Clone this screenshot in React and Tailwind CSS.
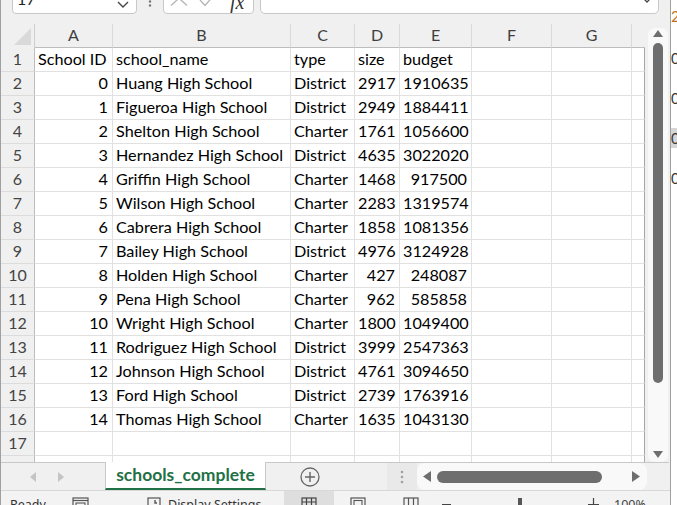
import React from 'react';

const data = [
  [0, 'Huang High School', 'District', 2917, 1910635],
  [1, 'Figueroa High School', 'District', 2949, 1884411],
  [2, 'Shelton High School', 'Charter', 1761, 1056600],
  [3, 'Hernandez High School', 'District', 4635, 3022020],
  [4, 'Griffin High School', 'Charter', 1468, 917500],
  [5, 'Wilson High School', 'Charter', 2283, 1319574],
  [6, 'Cabrera High School', 'Charter', 1858, 1081356],
  [7, 'Bailey High School', 'District', 4976, 3124928],
  [8, 'Holden High School', 'Charter', 427, 248087],
  [9, 'Pena High School', 'Charter', 962, 585858],
  [10, 'Wright High School', 'Charter', 1800, 1049400],
  [11, 'Rodriguez High School', 'District', 3999, 2547363],
  [12, 'Johnson High School', 'District', 4761, 3094650],
  [13, 'Ford High School', 'District', 2739, 1763916],
  [14, 'Thomas High School', 'Charter', 1635, 1043130],
];

const letters = ['A', 'B', 'C', 'D', 'E', 'F', 'G'];

function RowHeader({ n }) {
  return (
    <div className="h-[24px] bg-[#f0f0f0] border-r border-b border-r-[#bdbdbd] border-b-[#dcdcdc] text-center text-[16px] leading-[21px] text-[#444]">
      {n}
    </div>
  );
}

function Cell({ children, right, last }) {
  return (
    <div
      className={
        'h-[24px] border-b border-r border-b-[#e1e1e1] whitespace-nowrap text-[16.2px] leading-[21px] text-black pl-[3px] pr-[4px] ' +
        (right ? 'text-right ' : 'text-left ') +
        (last ? 'border-r-[#a8a8a8]' : 'border-r-[#e1e1e1]')
      }
    >
      {children}
    </div>
  );
}

function Row({ n, cells }) {
  const c = cells || ['', '', '', '', ''];
  const rights = [true, false, false, true, true];
  return (
    <>
      <RowHeader n={n} />
      {c.map((v, i) => (
        <Cell key={i} right={rights[i] && !(n === 1)}>
          {v}
        </Cell>
      ))}
      <Cell />
      <Cell />
      <Cell last />
    </>
  );
}

export default function App() {
  return (
    <div className="w-[677px] h-[505px] flex overflow-hidden bg-white font-[Lato,sans-serif]">
      {/* main window */}
      <div className="w-[671px] h-[505px] flex flex-col border-l border-r border-[#a0a0a0] bg-[#f0f0f0] overflow-hidden">
        {/* formula bar */}
        <div className="h-[24px] flex items-start shrink-0 overflow-hidden">
          <div className="ml-[11px] mt-[-16px] w-[125px] h-[30px] bg-white border border-[#c8c8c8] rounded-[4px] flex items-start justify-between pl-[4px] pt-[3px] pr-[7px] overflow-hidden">
            <span className="text-[16px] leading-[21px] text-[#222]">17</span>
            <svg width="12" height="22" viewBox="0 0 12 22" className="mt-[3px]">
              <path d="M1 11 L6 16 L11 11" fill="none" stroke="#444" strokeWidth="1.4" />
            </svg>
          </div>
          <svg width="26" height="24" viewBox="0 0 26 24" className="shrink-0">
            <circle cx="13" cy="1.5" r="1.2" fill="#777" />
            <circle cx="13" cy="5.5" r="1.2" fill="#777" />
          </svg>
          <div className="mt-[-16px] w-[91px] h-[30px] bg-white border border-[#c8c8c8] rounded-[4px] overflow-hidden shrink-0 flex items-start">
            <svg width="60" height="30" viewBox="0 0 60 30" className="shrink-0">
              <path d="M7 6 L23 20.5 M23 6 L7 20.5" fill="none" stroke="#b4b4b4" strokeWidth="1.3" />
              <path d="M36 15 L41 20.5 L51 9" fill="none" stroke="#b4b4b4" strokeWidth="1.3" />
            </svg>
            <div className="mt-[8px] ml-[6px] h-[24px] overflow-hidden">
              <span className="block italic text-[20px] leading-[18px] text-[#333] font-['Liberation_Serif',serif]">fx</span>
            </div>
          </div>
          <div className="ml-[6px] mt-[-16px] w-[399px] h-[30px] bg-white border border-[#c8c8c8] rounded-[5px] flex justify-end pr-[7px] shrink-0 overflow-hidden">
            <svg width="8" height="20" viewBox="0 0 8 20" className="mt-[12px]">
              <path d="M1 2 L4 5 L7 2" fill="none" stroke="#444" strokeWidth="1.3" />
            </svg>
          </div>
        </div>

        {/* grid area */}
        <div className="h-[438px] flex shrink-0 overflow-hidden">
          <div className="w-[644px] grid grid-cols-[34px_78px_178px_64px_45px_72px_80px_80px_13px] auto-rows-[24px] bg-white content-start">
            {/* header row */}
            <div className="h-[24px] bg-[#f0f0f0] border-r border-[#cfcfcf] flex items-end justify-end pr-[2px] pb-[3px]">
              <svg width="18" height="17" viewBox="0 0 18 17">
                <path d="M17 0 L17 17 L0 17 Z" fill="#d9d9d9" />
              </svg>
            </div>
            {letters.map((l) => (
              <div
                key={l}
                className="h-[24px] bg-[#f0f0f0] border-r border-b border-r-[#d9d9d9] border-b-[#bdbdbd] text-center text-[16px] leading-[21px] text-[#404040]"
              >
                {l}
              </div>
            ))}
            <div className="h-[24px] bg-[#f0f0f0] border-b border-b-[#bdbdbd]" />
            <Row n={1} cells={['School ID', 'school_name', 'type', 'size', 'budget']} />
            {data.map((d, i) => (
              <Row key={i} n={i + 2} cells={d} />
            ))}
            <Row n={17} />
            <Row n={18} />
          </div>
          {/* vertical scrollbar */}
          <div className="w-[25px] bg-[#f0f0f0] pl-[3px] pt-[4px]">
            <div className="w-[20px] h-[434px] bg-[#f9f9f9] rounded-[7px] flex flex-col items-center">
              <svg width="10" height="8" viewBox="0 0 10 8" className="mt-[2px]">
                <path d="M5 0 L10 7 L0 7 Z" fill="#6e6e6e" />
              </svg>
              <div className="mt-[5px] w-[10px] h-[340px] rounded-full bg-[#6e6e6e]" />
              <div className="flex-1" />
              <svg width="10" height="8" viewBox="0 0 10 8" className="mb-[3px]">
                <path d="M0 0 L10 0 L5 7 Z" fill="#6e6e6e" />
              </svg>
            </div>
          </div>
        </div>

        {/* sheet tab bar */}
        <div className="h-[28px] flex shrink-0">
          <div className="w-[104px] border-t border-[#c8c8c8] flex items-center">
            <svg width="8" height="12" viewBox="0 0 8 12" className="ml-[28px]">
              <path d="M7 1 L1 6 L7 11 Z" fill="#c4c4c4" />
            </svg>
            <svg width="8" height="12" viewBox="0 0 8 12" className="ml-[20px]">
              <path d="M1 1 L7 6 L1 11 Z" fill="#c4c4c4" />
            </svg>
          </div>
          <div className="w-[161px] bg-white border-l border-r border-[#c8c8c8] border-b-2 border-b-[#1f7145] flex items-start justify-center">
            <span className="font-bold text-[#1f7145] text-[17.5px] leading-[21px] mt-[2px]">schools_complete</span>
          </div>
          <div className="w-[121px] border-t border-[#c8c8c8] flex items-center">
            <svg width="22" height="22" viewBox="0 0 22 22" className="ml-[33px] mt-[1px]">
              <circle cx="11" cy="11" r="9" fill="none" stroke="#666" strokeWidth="1.3" />
              <path d="M11 6 V16 M6 11 H16" stroke="#666" strokeWidth="1.4" />
            </svg>
          </div>
          <div className="w-[30px] border-t border-[#c8c8c8] bg-[#e9e9e9] flex items-center justify-center">
            <svg width="4" height="14" viewBox="0 0 4 14">
              <circle cx="2" cy="2" r="1.3" fill="#a0a0a0" />
              <circle cx="2" cy="7" r="1.3" fill="#a0a0a0" />
              <circle cx="2" cy="12" r="1.3" fill="#a0a0a0" />
            </svg>
          </div>
          <div className="w-[252px] border-t border-[#c8c8c8] flex">
            <div className="w-[230px] bg-[#f9f9f9] rounded-[8px] flex items-center">
              <svg width="8" height="11" viewBox="0 0 8 11" className="ml-[6px]">
                <path d="M8 0 L0 5.5 L8 11 Z" fill="#6e6e6e" />
              </svg>
              <div className="ml-[6px] w-[165px] h-[12px] rounded-full bg-[#6e6e6e]" />
              <svg width="8" height="11" viewBox="0 0 8 11" className="ml-[30px]">
                <path d="M0 0 L8 5.5 L0 11 Z" fill="#6e6e6e" />
              </svg>
            </div>
          </div>
        </div>

        {/* status bar */}
        <div className="h-[15px] flex items-start border-t border-[#d8d8d8] bg-[#f3f3f3] text-[12.5px] leading-[18px] text-[#333] font-['Noto_Sans',sans-serif] overflow-hidden shrink-0">
          <div className="ml-[9px] w-[62px] mt-[5px] whitespace-nowrap">Ready</div>
          <svg width="17" height="16" viewBox="0 0 17 16" className="mt-[6px] shrink-0">
            <rect x="1" y="1" width="15" height="14" fill="none" stroke="#555" strokeWidth="1.2" />
            <path d="M1 3.5 H16" stroke="#555" strokeWidth="1.2" />
            <rect x="4" y="6" width="9" height="6" fill="none" stroke="#555" strokeWidth="1.1" />
          </svg>
          <div className="w-[58px] shrink-0" />
          <svg width="14" height="16" viewBox="0 0 14 16" className="mt-[6px] shrink-0">
            <rect x="1" y="1" width="12" height="14" fill="none" stroke="#555" strokeWidth="1.2" />
            <path d="M8 3 L8 6 L10 6" fill="none" stroke="#555" strokeWidth="1.4" />
          </svg>
          <div className="ml-[7px] w-[116px] mt-[5px] whitespace-nowrap shrink-0">Display Settings</div>
          <div className="w-[50px] h-[15px] bg-[#dedede] flex justify-center shrink-0">
            <svg width="16" height="16" viewBox="0 0 16 16" className="mt-[6px]">
              <rect x="1" y="1" width="14" height="14" fill="none" stroke="#444" strokeWidth="1.2" />
              <path d="M1 5 H15 M5.5 1 V15 M10.5 1 V15" stroke="#444" strokeWidth="1.2" />
            </svg>
          </div>
          <svg width="16" height="16" viewBox="0 0 16 16" className="ml-[16px] mt-[6px] shrink-0">
            <rect x="1" y="1" width="14" height="14" fill="none" stroke="#555" strokeWidth="1.2" />
            <rect x="4" y="3.5" width="8" height="9" fill="none" stroke="#555" strokeWidth="1.1" />
          </svg>
          <svg width="16" height="16" viewBox="0 0 16 16" className="ml-[37px] mt-[6px] shrink-0">
            <rect x="1" y="1" width="14" height="14" fill="none" stroke="#555" strokeWidth="1.2" />
            <path d="M5.5 1 V15 M10.5 1 V15" stroke="#555" strokeWidth="1.2" />
          </svg>
          <div className="ml-[23px] mt-[13px] w-[9px] h-[1px] bg-[#444] shrink-0" />
          <div className="ml-[67px] mt-[7px] w-[4px] h-[10px] bg-[#555] shrink-0" />
          <svg width="11" height="16" viewBox="0 0 11 16" className="ml-[66px] mt-[7px] shrink-0">
            <path d="M5.5 0 V11 M0 6.5 H11" stroke="#444" strokeWidth="1.2" />
          </svg>
          <div className="ml-[15px] mt-[5px] text-[#444] whitespace-nowrap">100%</div>
        </div>
      </div>
      {/* background window sliver */}
      <div className="w-[6px] h-[505px] bg-white flex flex-col overflow-hidden text-[15px] leading-[20px] text-[#3a3a3a] font-[Lato,sans-serif]">
        <span className="mt-[6px] text-[#c07020]">2</span>
        <span className="mt-[22px]">0</span>
        <span className="mt-[20px]">0</span>
        <span className="mt-[20px] bg-[#d6d6d6]">0</span>
        <span className="mt-[20px]">0</span>
      </div>
    </div>
  );
}
